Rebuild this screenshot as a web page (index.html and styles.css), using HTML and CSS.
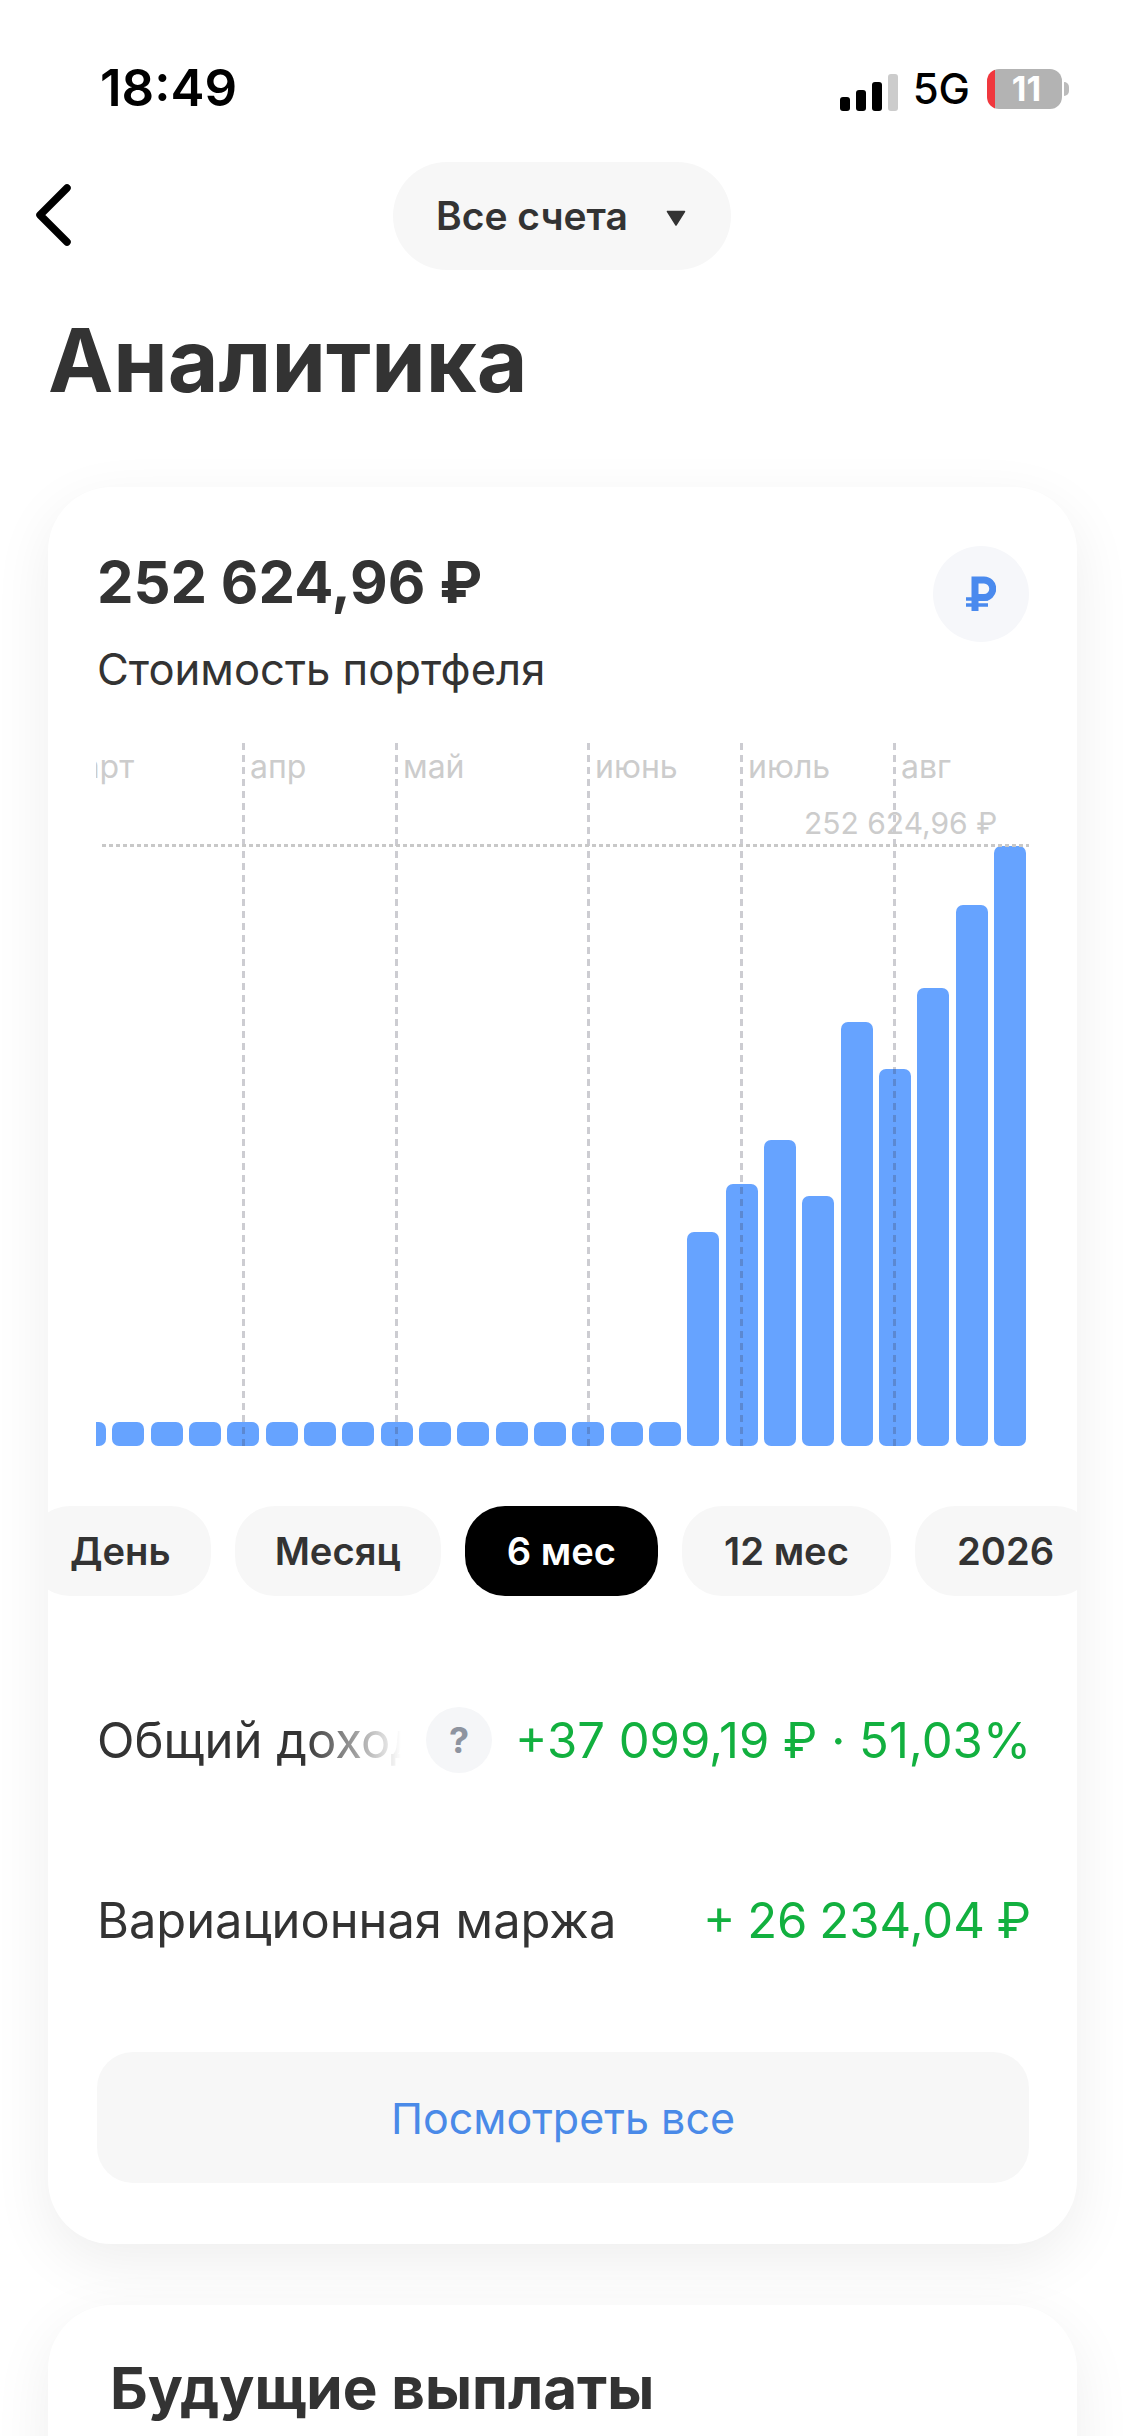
FILE: index.html
```html
<!DOCTYPE html>
<html lang="ru">
<head>
<meta charset="utf-8">
<title>Аналитика</title>
<link rel="stylesheet" href="styles.css">
</head>
<body>
<div class="screen">
  <div class="status">
    <span class="time">18:49</span>
    <div class="status-right">
      <div class="signal">
        <i class="sig s1"></i><i class="sig s2"></i><i class="sig s3"></i><i class="sig s4"></i>
      </div>
      <span class="net">5G</span>
      <div class="battery"><span class="battery-num">11</span></div>
      <i class="battery-nub"></i>
    </div>
  </div>

  <header class="nav">
    <svg class="back" width="40" height="64" viewBox="0 0 40 64" fill="none"><path d="M34 6 L7 33 L34 60" transform="translate(0 -1)" stroke="#000" stroke-width="7.5" stroke-linecap="round" stroke-linejoin="round"/></svg>
    <div class="account">
      <span class="account-name">Все счета</span>
      <svg class="caret" width="20" height="16" viewBox="0 0 20 16"><path d="M1.5 1.5 H18.5 L10 15 Z" fill="#333" stroke="#333" stroke-width="1.5" stroke-linejoin="round"/></svg>
    </div>
  </header>

  <h1 class="title">Аналитика</h1>

  <section class="card main">
    <div class="head">
      <div class="amount">252 624,96 ₽</div>
      <div class="coin">
        <svg width="30" height="36" viewBox="0 0 30 36" fill="none"><path d="M9 35 V4 H18 A8.5 8.5 0 0 1 18 21.5 H9" stroke="#4a8aee" stroke-width="7"/><path d="M0 23 H22 M0 29 H22" stroke="#4a8aee" stroke-width="3.5"/></svg>
      </div>
    </div>
    <div class="sub">Стоимость портфеля</div>

    <div class="chart">
      <div class="bars">
        <i class="bar" style="height:24px"></i><i class="bar" style="height:24px"></i><i class="bar" style="height:24px"></i><i class="bar" style="height:24px"></i>
        <i class="bar" style="height:24px"></i><i class="bar" style="height:24px"></i><i class="bar" style="height:24px"></i><i class="bar" style="height:24px"></i>
        <i class="bar" style="height:24px"></i><i class="bar" style="height:24px"></i><i class="bar" style="height:24px"></i><i class="bar" style="height:24px"></i>
        <i class="bar" style="height:24px"></i><i class="bar" style="height:24px"></i><i class="bar" style="height:24px"></i><i class="bar" style="height:24px"></i>
        <i class="bar" style="height:214px"></i><i class="bar" style="height:262px"></i><i class="bar" style="height:306px"></i><i class="bar" style="height:250px"></i>
        <i class="bar" style="height:424px"></i><i class="bar" style="height:377px"></i><i class="bar" style="height:458px"></i><i class="bar" style="height:541px"></i>
        <i class="bar" style="height:600px"></i>
      </div>
      <div class="grid" style="left:-47px"><span>март</span></div>
      <div class="grid" style="left:146px"><span>апр</span></div>
      <div class="grid" style="left:299px"><span>май</span></div>
      <div class="grid" style="left:491px"><span>июнь</span></div>
      <div class="grid" style="left:644px"><span>июль</span></div>
      <div class="grid" style="left:797px"><span>авг</span></div>
      <div class="hline"></div>
      <div class="maxval">252 624,96 ₽</div>
    </div>

    <div class="tabs">
      <div class="tab first">День</div>
      <div class="tab">Месяц</div>
      <div class="tab num active">6 мес</div>
      <div class="tab num">12 мес</div>
      <div class="tab num">2026</div>
    </div>

    <div class="row">
      <div class="label-fade">Общий доход</div>
      <div class="help">?</div>
      <div class="value">+37 099,19 ₽ · 51,03%</div>
    </div>
    <div class="row">
      <div class="label">Вариационная маржа</div>
      <div class="value tight">+ 26 234,04 ₽</div>
    </div>

    <div class="more">Посмотреть все</div>
  </section>

  <section class="card next">
    <h2 class="next-title">Будущие выплаты</h2>
  </section>
</div>
</body>
</html>
```

FILE: styles.css
```css
* { box-sizing: border-box; }
html, body { margin: 0; padding: 0; background: #fff; }
body { font-family: Inter, "Liberation Sans", sans-serif; color: #333; }
.screen { width: 1125px; height: 2436px; overflow: hidden; background: #fff; }

.status { height: 162px; padding: 62px 56px 0 100px; display: flex; justify-content: space-between; align-items: flex-start; color: #000; }
.time { font-size: 51px; line-height: 52px; font-weight: 600; letter-spacing: 0; }
.status-right { display: flex; align-items: center; height: 52px; margin-top: 1px; }
.signal { display: flex; align-items: flex-end; gap: 6px; height: 37px; margin-top: 6px; }
.sig { display: block; width: 10px; border-radius: 3px; background: #000; }
.s1 { height: 14px; }
.s2 { height: 21px; }
.s3 { height: 29px; }
.s4 { height: 37px; background: #ccc; }
.net { font-size: 42px; font-weight: 500; line-height: 52px; margin-left: 15px; }
.battery { width: 75px; height: 40px; margin-left: 17px; border-radius: 12px; background: linear-gradient(90deg, #f0383e 0 8px, #b3b3b3 8px); display: flex; align-items: center; justify-content: center; padding-left: 4px; }
.battery-num { color: #fff; font-size: 34px; font-weight: 700; line-height: 40px; }
.battery-nub { display: block; width: 5px; height: 14px; margin-left: 2px; background: #bbb; border-radius: 0 7px 7px 0; }

.nav { height: 108px; display: grid; grid-template-columns: 393px 338px 1fr; align-items: center; }
.back { margin-left: 33px; margin-top: -2px; }
.account { height: 108px; border-radius: 54px; background: #f7f7f7; display: flex; align-items: center; justify-content: space-between; padding: 0 45px 0 43px; font-size: 39px; font-weight: 600; color: #333; }
.account-name { margin-top: -2px; }
.caret { margin-top: 3px; }

.title { margin: 36px 0 0 48px; font-size: 87.5px; line-height: 108px; font-weight: 700; color: #333; letter-spacing: 0; }

.card { width: 1029px; margin-left: 48px; background: #fff; border-radius: 64px; box-shadow: 0 18px 60px rgba(0, 0, 0, 0.07); }
.main { margin-top: 73px; height: 1757px; padding: 59px 48px 0 49px; overflow: hidden; }
.head { display: flex; justify-content: space-between; align-items: flex-start; height: 96px; }
.amount { font-size: 58px; line-height: 72px; font-weight: 700; color: #333; }
.coin { width: 96px; height: 96px; border-radius: 50%; background: #f6f7fa; display: flex; align-items: center; justify-content: center; }
.sub { font-size: 43.6px; line-height: 56px; color: #333; }

.chart { position: relative; margin: 45px 0 0 -1px; width: 933px; height: 703px; overflow: hidden; }
.bars { height: 703px; display: flex; justify-content: flex-end; align-items: flex-end; gap: 6.33px; padding-right: 3px; }
.bar { display: block; flex: none; width: 32px; background: #66a3ff; border-radius: 7px; }
.grid { position: absolute; top: 0; bottom: 0; width: 3px; background: repeating-linear-gradient(180deg, rgba(60, 60, 80, 0.26) 0 7px, transparent 7px 12px); }
.grid span { position: absolute; left: 8px; top: 4px; font-size: 32px; line-height: 40px; color: #ccc; white-space: nowrap; }
.hline { position: absolute; left: 6px; right: 0; top: 101px; height: 3px; background: repeating-linear-gradient(90deg, #c8c8c8 0 4px, transparent 4px 7px); }
.maxval { position: absolute; left: 708px; top: 60px; font-size: 30px; line-height: 40px; color: #ccc; white-space: nowrap; }

.tabs { display: flex; gap: 24px; margin: 60px -48px 0 -49px; overflow: hidden; }
.tab { flex: none; height: 90px; padding: 0 40px; border-radius: 40px; background: #f7f7f7; display: flex; align-items: center; font-size: 38.2px; font-weight: 600; color: #333; white-space: nowrap; }
.tab.num { padding: 0 42px; }
.tab.first { margin-left: -18px; }
.tab.active { background: #000; color: #fff; }

.row { height: 180px; display: flex; align-items: center; font-size: 49px; }
.tabs + .row { margin-top: 54px; }
.label-fade { width: 304px; flex: none; overflow: hidden; white-space: nowrap; color: #333; -webkit-mask-image: linear-gradient(90deg, #000 68%, transparent 100%); mask-image: linear-gradient(90deg, #000 68%, transparent 100%); }
.label { font-size: 48.8px; white-space: nowrap; color: #333; }
.help { flex: none; width: 66px; height: 66px; margin-left: 25px; border-radius: 50%; background: #f5f6f8; display: flex; align-items: center; justify-content: center; font-size: 36px; font-weight: 700; color: #8e94a0; }
.value { margin-left: auto; margin-right: -2px; white-space: nowrap; color: #12b03f; }
.value.tight { word-spacing: -2px; }

.more { margin-top: 42px; height: 131px; border-radius: 36px; background: #f7f7f7; display: flex; align-items: center; justify-content: center; font-size: 43px; color: #4a8ae8; }

.next { margin-top: 61px; height: 400px; padding: 49px 62px 0; }
.next-title { margin: 0; font-size: 58.4px; line-height: 68px; font-weight: 700; color: #333; }
```
